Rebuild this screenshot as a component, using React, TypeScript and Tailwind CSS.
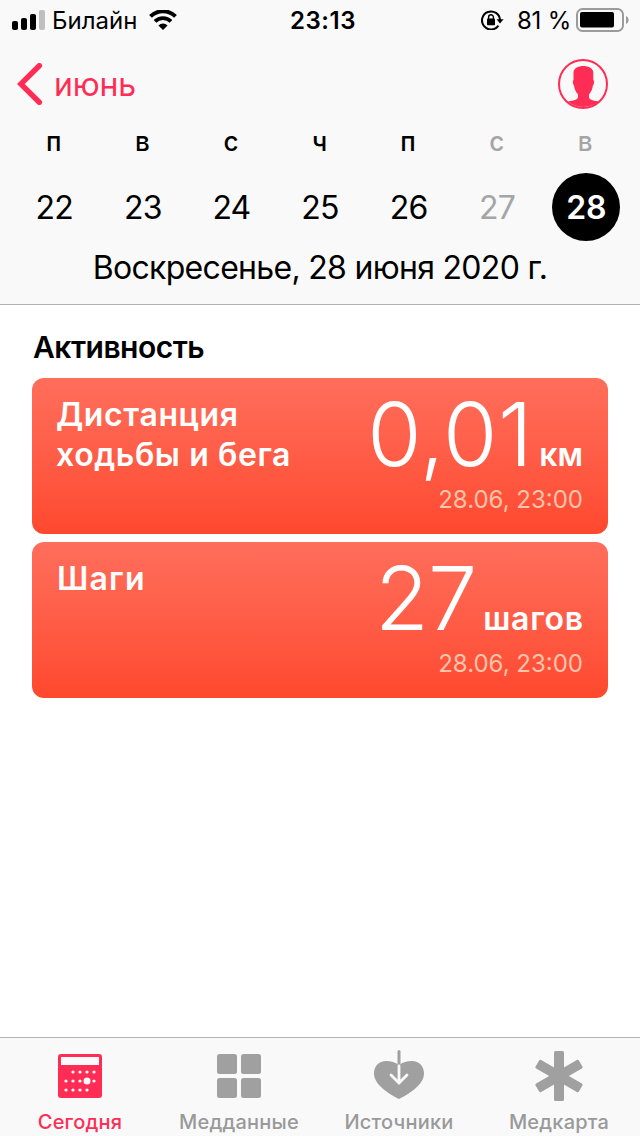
import React from 'react';

interface Day {
  letter: string;
  date: number;
  muted?: boolean;
  selected?: boolean;
}

interface Metric {
  title: string[];
  value: string;
  unit: string;
  time: string;
  titleClass: string;
  valueClass: string;
  unitClass: string;
}

const days: Day[] = [
  { letter: 'п', date: 22 },
  { letter: 'в', date: 23 },
  { letter: 'с', date: 24 },
  { letter: 'ч', date: 25 },
  { letter: 'п', date: 26 },
  { letter: 'с', date: 27, muted: true },
  { letter: 'в', date: 28, muted: true, selected: true },
];

const metrics: Metric[] = [
  {
    title: ['Дистанция', 'ходьбы и бега'],
    value: '0,01',
    unit: 'км',
    time: '28.06, 23:00',
    titleClass: 'tracking-[0.6px]',
    valueClass: 'tracking-[0.6px]',
    unitClass: 'ml-[6px]',
  },
  {
    title: ['Шаги'],
    value: '27',
    unit: 'шагов',
    time: '28.06, 23:00',
    titleClass: 'tracking-[1.2px] pl-px',
    valueClass: 'tracking-[-1px]',
    unitClass: 'ml-[7px] tracking-[0.7px] -mr-[0.7px]',
  },
];

const StatusBar = () => (
  <div className="flex h-10 items-center pl-3 pr-[10px]">
    <div className="flex flex-1 items-center">
      <svg width="33" height="20" viewBox="0 0 33 20">
        <rect x="0" y="11" width="6" height="9" rx="2" fill="#000" />
        <rect x="9" y="8" width="6" height="12" rx="2" fill="#000" />
        <rect x="18" y="4" width="6" height="16" rx="2" fill="#000" />
        <rect x="27" y="0" width="6" height="20" rx="2" fill="#bfbfbf" />
      </svg>
      <span className="ml-[7px] pt-px text-[24px] leading-10">Билайн</span>
      <svg className="ml-3" width="28" height="20" viewBox="0 0 28 20">
        <path d="M1.5 6.4a17.8 17.8 0 0 1 25 0" fill="none" stroke="#000" strokeWidth="4" />
        <path d="M6 11.4a11.4 11.4 0 0 1 16 0" fill="none" stroke="#000" strokeWidth="3.8" />
        <path d="M14 20l-4.6-4.5a6.4 6.4 0 0 1 9.2 0z" fill="#000" />
      </svg>
    </div>
    <span className="pl-[4px] pt-px text-[24px] font-semibold leading-10 tracking-[0.5px]">23:13</span>
    <div className="flex flex-1 items-center justify-end">
      <svg width="23" height="20" viewBox="0 0 23 20">
        <path d="M17.4 15.6A9 9 0 1 1 19 10" fill="none" stroke="#000" strokeWidth="2" />
        <path d="M15.6 9.2h7L19 13.6z" fill="#000" />
        <rect x="6" y="8.6" width="8" height="6.6" rx="0.8" fill="#000" />
        <path d="M7.6 9V7.2a2.4 2.4 0 0 1 4.8 0V9" fill="none" stroke="#000" strokeWidth="1.4" />
      </svg>
      <span className="ml-[13px] pt-px text-[24px] leading-10 tracking-[-0.2px]">81 %</span>
      <svg className="ml-[5px]" width="54" height="24" viewBox="0 0 54 24">
        <rect x="1" y="1" width="46" height="22" rx="5.5" fill="none" stroke="#9b9b9b" strokeWidth="2" />
        <rect x="4" y="4" width="34" height="15.5" rx="2" fill="#000" />
        <path d="M50 8v8c3.4-1.2 3.4-6.8 0-8z" fill="#9b9b9b" />
      </svg>
    </div>
  </div>
);

const NavBar = () => (
  <div className="flex h-[88px] items-center justify-between pl-[17px] pr-8">
    <button className="flex items-center text-[#ff2d55]">
      <svg width="26" height="42" viewBox="0 0 26 42" fill="none">
        <path d="M22.3 2.8L3.8 21l18.5 18.2" stroke="currentColor" strokeWidth="5.5" strokeLinecap="round" />
      </svg>
      <span className="ml-[11px] pt-px text-[32px] leading-10 tracking-[-0.2px]">июнь</span>
    </button>
    <svg width="50" height="50" viewBox="0 0 50 50">
      <circle cx="25" cy="25" r="24" fill="none" stroke="#ff2d55" strokeWidth="2" />
      <path
        d="M15.5 13C16 9 20.5 7 25.3 7S34.7 9 35.3 13V21C36.6 21.5 36 26 34.9 26.5C34.6 29.5 33.500 32.500 31 35.500V38C31 40.5 34 41.5 40.5 42.500A24 24 0 0 1 10 42.500C16.5 41.5 20 40.5 20 38V35.500C17.5 32.500 16.300 29.500 16 26.5C15 26 14.4 21.5 15.5 21Z"
        fill="#ff2d55"
      />
    </svg>
  </div>
);

const Header = () => (
  <header className="h-[305px] border-b border-[#b2b2b2] bg-[#f9f9f9]">
    <StatusBar />
    <NavBar />
    <div className="grid grid-cols-7 px-[10px] text-center">
      {days.map((day) => (
        <div key={day.date} className="flex flex-col items-center">
          <span className={`pr-px text-[26px] font-medium leading-7 ${day.muted ? 'text-[#a5a5a5]' : 'text-black'}`}>
            {day.letter}
          </span>
          <span
            className={`mt-[17px] flex size-[68px] items-center justify-center rounded-full pt-px text-[32px] ${
              day.selected
                ? 'bg-black pl-px font-semibold tracking-[-0.3px] text-white'
                : day.muted
                  ? 'tracking-[-0.8px] text-[#a5a5a5]'
                  : 'tracking-[-0.8px] text-black'
            }`}
          >
            {day.date}
          </span>
        </div>
      ))}
    </div>
    <p className="mt-[7px] text-center text-[32px] leading-10 tracking-[-0.7px]">Воскресенье, 28 июня 2020 г.</p>
  </header>
);

const MetricCard = ({ metric }: { metric: Metric }) => (
  <div className="flex h-[156px] justify-between rounded-xl bg-linear-to-b from-[#ff6e5b] to-[#ff482e] pl-6 pr-[25px] text-white">
    <div className={`pt-[17px] text-[32px] font-semibold leading-10 ${metric.titleClass}`}>
      {metric.title.map((line) => (
        <div key={line} className="whitespace-nowrap">{line}</div>
      ))}
    </div>
    <div className="flex flex-col items-end">
      <div className="flex h-[106px] items-baseline whitespace-nowrap">
        <span className={`text-[88px] font-light leading-[112px] ${metric.valueClass}`}>{metric.value}</span>
        <span className={`text-[32px] font-semibold ${metric.unitClass}`}>{metric.unit}</span>
      </div>
      <span className="text-[24px] leading-8 text-[#ffc4ab]">{metric.time}</span>
    </div>
  </div>
);

const CalendarIcon = () => (
  <svg width="50" height="50" viewBox="0 0 50 50">
    <rect x="3" y="3" width="44" height="44" rx="3" fill="#ff2d55" />
    <rect x="6" y="6" width="38" height="8" fill="#f9f9f9" />
    <g fill="#f9f9f9">
      {[18, 25, 32, 39].map((x) => <circle key={x} cx={x} cy="21" r="1.6" />)}
      {[11, 18, 25, 39].map((x) => <circle key={x} cx={x} cy="30" r="1.6" />)}
      {[11, 18, 25, 32].map((x) => <circle key={x} cx={x} cy="39" r="1.6" />)}
      <circle cx="32" cy="30" r="3.5" />
    </g>
  </svg>
);

const GridIcon = () => (
  <svg width="50" height="50" viewBox="0 0 50 50" fill="#a0a0a0">
    <rect x="3" y="3" width="20" height="20" rx="2.5" />
    <rect x="27" y="3" width="20" height="20" rx="2.5" />
    <rect x="3" y="27" width="20" height="20" rx="2.5" />
    <rect x="27" y="27" width="20" height="20" rx="2.5" />
  </svg>
);

const HeartIcon = () => (
  <svg width="50" height="50" viewBox="0 0 50 50" fill="none" overflow="visible">
    <path
      d="M25 48C17 44 0 34.5 0 22.5 0 15 5 10 12 10c5 0 9.5 1 13 4.500 3.5-3.500 8-4.500 13-4.500 7 0 12 5 12 12.500C50 34.5 33 44 25 48z"
      fill="#a0a0a0"
    />
    <path d="M25 .5V13" stroke="#a0a0a0" strokeWidth="3" strokeLinecap="round" />
    <path d="M25 15v17M17 24l8 8 8-8" stroke="#f9f9f9" strokeWidth="2.8" strokeLinecap="round" />
  </svg>
);

const AsteriskIcon = () => (
  <svg width="50" height="50" viewBox="0 0 50 50" fill="#a0a0a0">
    <rect x="20" y="0" width="10" height="50" rx="1.5" />
    <rect x="20" y="0" width="10" height="50" rx="1.5" transform="rotate(60 25 25)" />
    <rect x="20" y="0" width="10" height="50" rx="1.5" transform="rotate(120 25 25)" />
  </svg>
);

const tabs = [
  { label: 'Сегодня', icon: <CalendarIcon />, active: true },
  { label: 'Медданные', icon: <GridIcon />, shifted: true },
  { label: 'Источники', icon: <HeartIcon />, shifted: true },
  { label: 'Медкарта', icon: <AsteriskIcon />, shifted: true },
];

const TabBar = () => (
  <nav className="grid h-[99px] grid-cols-4 border-t border-[#b2b2b2] bg-[#f9f9f9]">
    {tabs.map((tab) => (
      <button key={tab.label} className={`flex flex-col items-center pt-[13px] ${tab.shifted ? 'pr-[2px]' : ''}`}>
        {tab.icon}
        <span
          className={`mt-[9px] text-[20px] font-medium leading-6 tracking-[0.2px] ${tab.active ? 'text-[#ff2d55]' : 'text-[#999999]'}`}
        >
          {tab.label}
        </span>
      </button>
    ))}
  </nav>
);

export default function App() {
  return (
    <div className="flex h-[1136px] w-[640px] flex-col overflow-hidden bg-white font-[Inter,sans-serif] text-black">
      <Header />
      <main className="flex-1 px-8">
        <h2 className="pl-px pt-[22px] text-[30px] font-semibold leading-10 tracking-[-0.5px]">Активность</h2>
        <div className="mt-[11px] flex flex-col gap-2">
          {metrics.map((metric) => (
            <MetricCard key={metric.unit} metric={metric} />
          ))}
        </div>
      </main>
      <TabBar />
    </div>
  );
}
